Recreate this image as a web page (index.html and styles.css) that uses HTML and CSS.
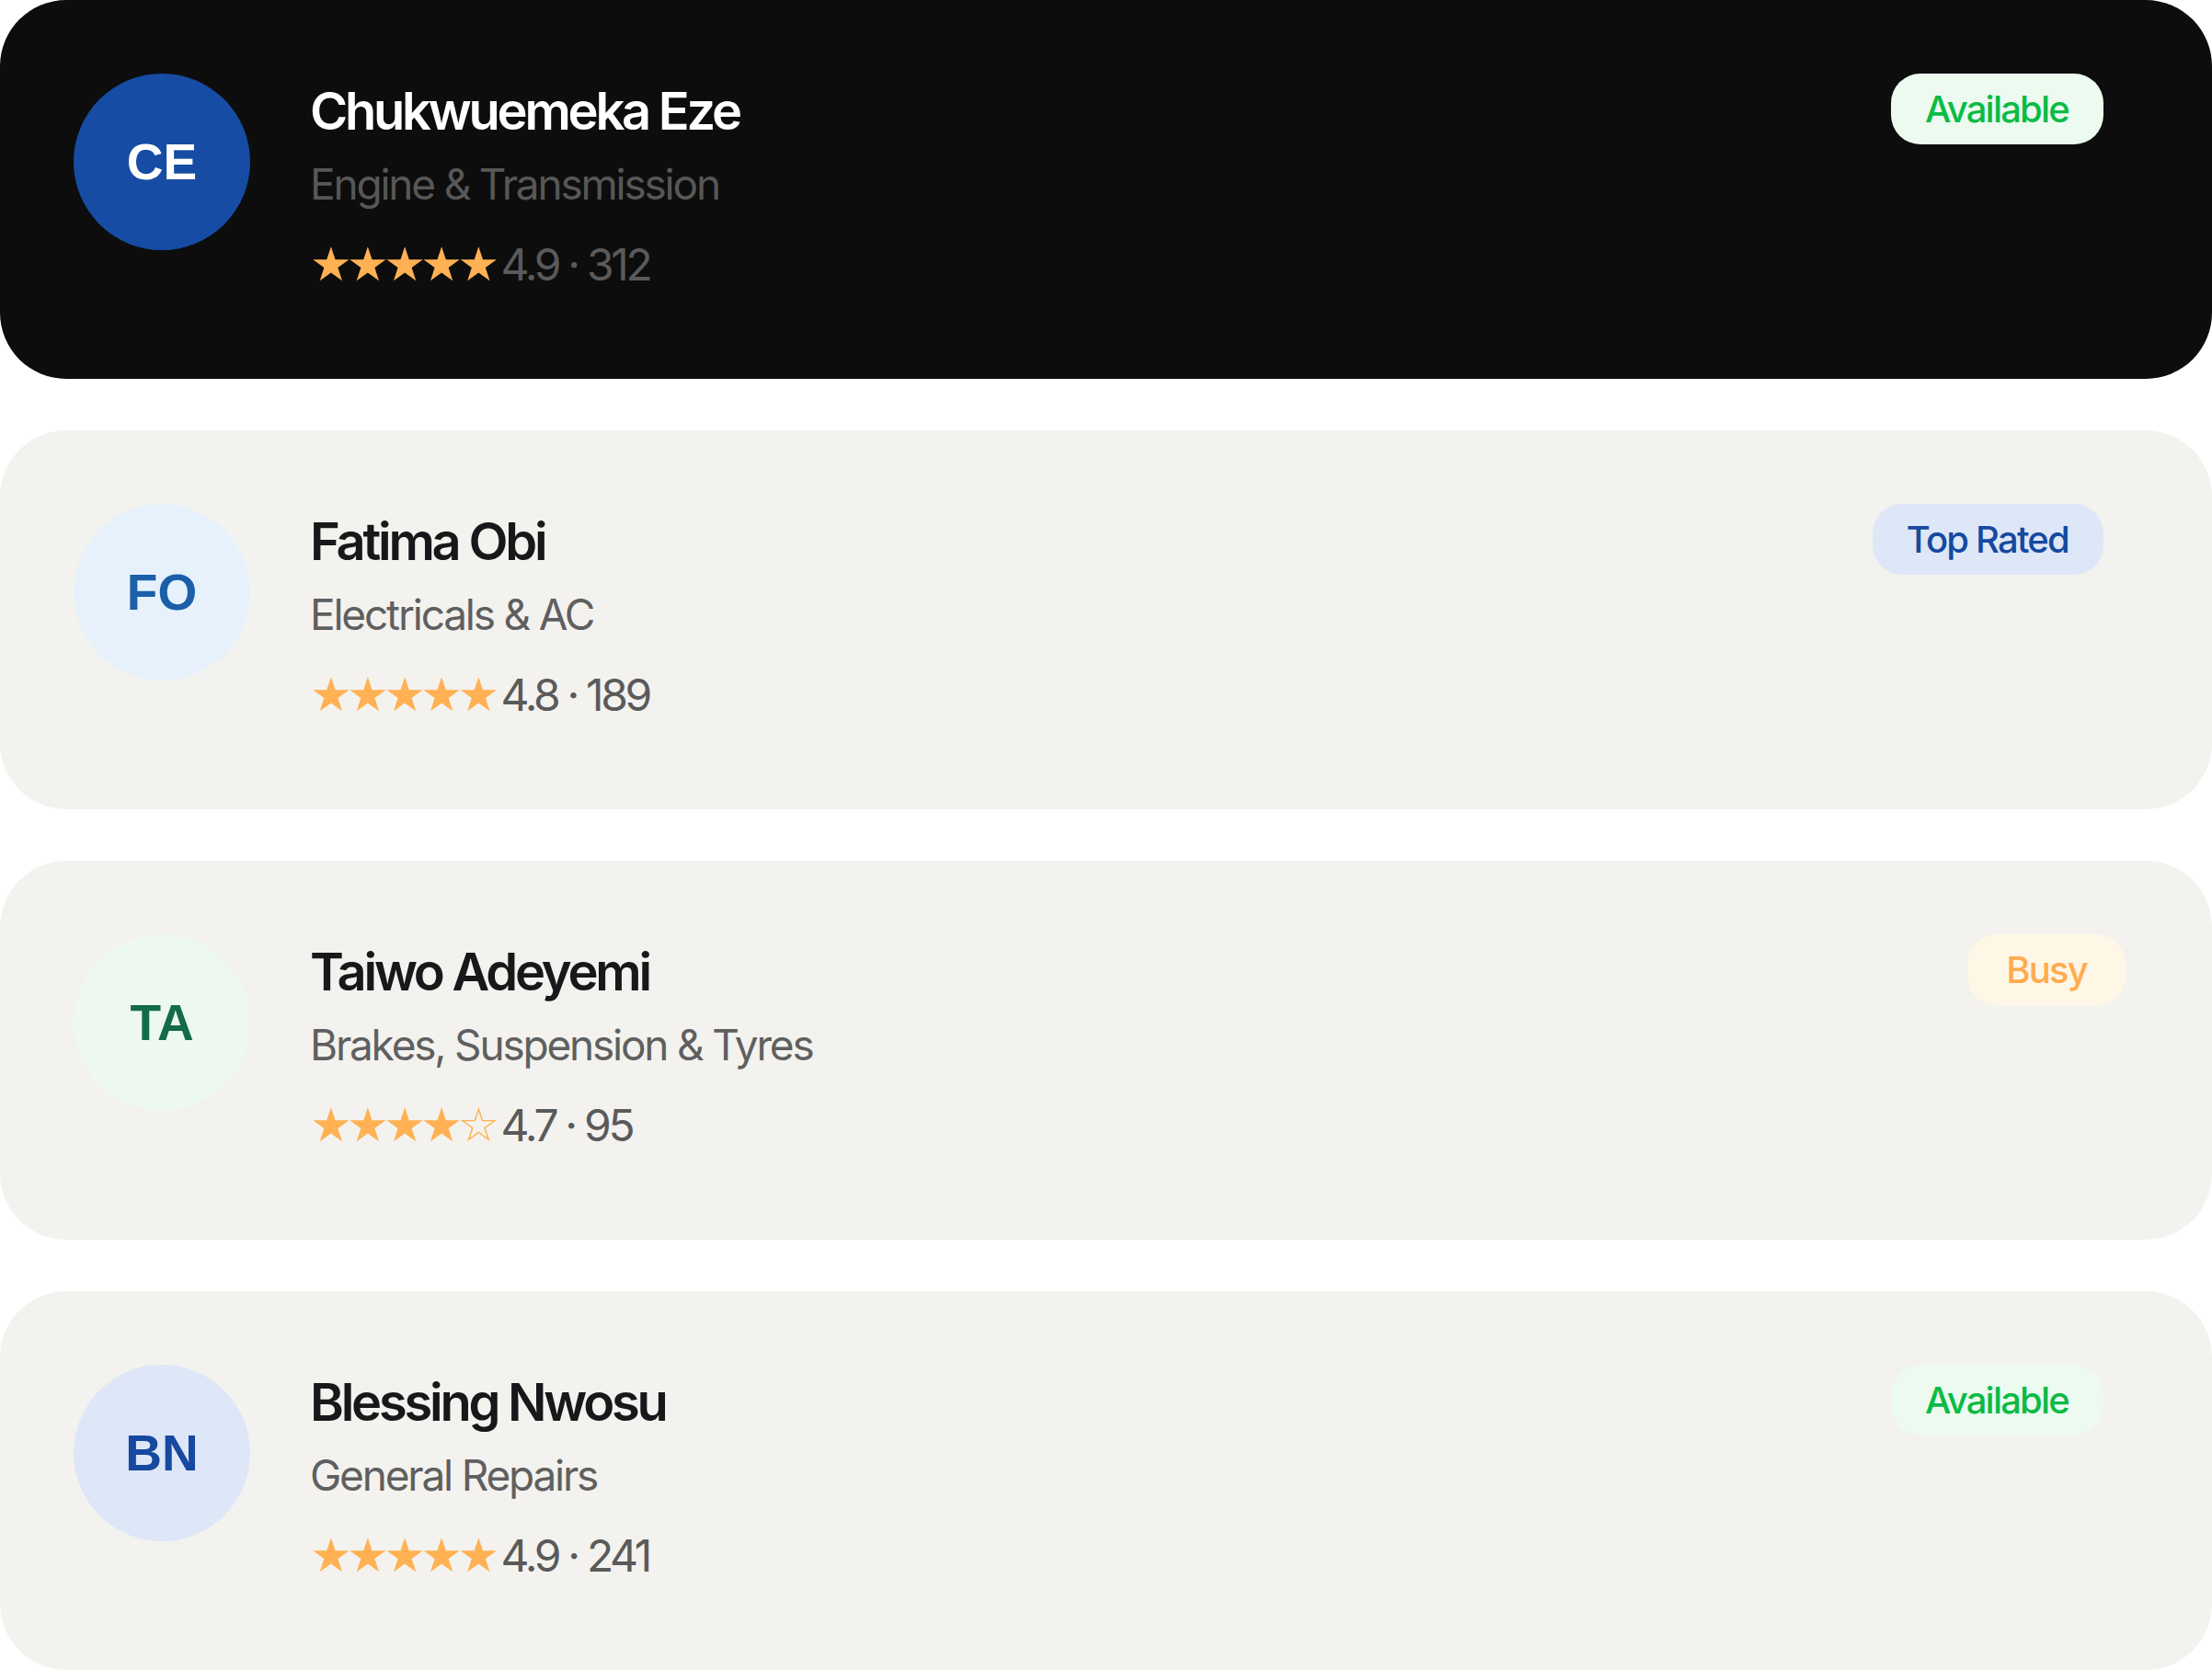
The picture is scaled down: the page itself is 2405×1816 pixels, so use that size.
FILE: index.html
```html
<!DOCTYPE html>
<html lang="en">
<head>
    <meta charset="UTF-8">
    <meta name="viewport" content="width=device-width, initial-scale=1.0">
    <title>Mechanics</title>
    <link rel="stylesheet" href="styles.css">
</head>
<body>
    <main class="mechanic-list">
        <article class="card card-dark">
            <div class="avatar avatar-blue">CE</div>
            <div class="info">
                <h2 class="name">Chukwuemeka Eze</h2>
                <p class="trade">Engine &amp; Transmission</p>
                <p class="rating"><span class="stars">★★★★★</span><span class="score">4.9 · 312</span></p>
            </div>
            <span class="badge badge-available">Available</span>
        </article>

        <article class="card">
            <div class="avatar avatar-sky">FO</div>
            <div class="info">
                <h2 class="name">Fatima Obi</h2>
                <p class="trade">Electricals &amp; AC</p>
                <p class="rating"><span class="stars">★★★★★</span><span class="score">4.8 · 189</span></p>
            </div>
            <span class="badge badge-top">Top Rated</span>
        </article>

        <article class="card">
            <div class="avatar avatar-mint">TA</div>
            <div class="info">
                <h2 class="name">Taiwo Adeyemi</h2>
                <p class="trade">Brakes, Suspension &amp; Tyres</p>
                <p class="rating"><span class="stars">★★★★☆</span><span class="score">4.7 · 95</span></p>
            </div>
            <span class="badge badge-busy">Busy</span>
        </article>

        <article class="card">
            <div class="avatar avatar-pale">BN</div>
            <div class="info">
                <h2 class="name">Blessing Nwosu</h2>
                <p class="trade">General Repairs</p>
                <p class="rating"><span class="stars">★★★★★</span><span class="score">4.9 · 241</span></p>
            </div>
            <span class="badge badge-available">Available</span>
        </article>
    </main>
</body>
</html>
```

FILE: styles.css
```css
:root {
    --card: #f3f2ee;
    --ink: #18181b;
    --muted: #5f5f5f;
    --star: #ffb153;
}

* {
    box-sizing: border-box;
    margin: 0;
    padding: 0;
}

body {
    background: #fff;
    font-family: 'Inter', 'Noto Sans', sans-serif;
}

.mechanic-list {
    display: grid;
    gap: 56px;
}

.card {
    display: flex;
    align-items: flex-start;
    gap: 65px;
    height: 412px;
    padding: 80px 118px 0 80px;
    background: var(--card);
    border-radius: 72px;
}

.card-dark {
    background: #0d0d0d;
}

.avatar {
    flex: none;
    width: 192px;
    height: 192px;
    border-radius: 50%;
    display: flex;
    align-items: center;
    justify-content: center;
    font-family: 'Liberation Sans', Arial, sans-serif;
    font-weight: 700;
    font-size: 55px;
}

.avatar-blue { background: #164ca3; color: #fff; }
.avatar-sky { background: #e6f1fb; color: #1b5fa9; }
.avatar-mint { background: #edf8f0; color: #146b4c; }
.avatar-pale { background: #dde7f7; color: #1649a0; }

.info {
    flex: 1;
}

.name {
    margin-top: 9px;
    font-size: 56px;
    line-height: 64px;
    font-weight: 600;
    letter-spacing: -0.058em;
    color: var(--ink);
}

.card-dark .name {
    color: #fff;
}

.trade {
    margin-top: 19px;
    font-size: 46px;
    line-height: 56px;
    letter-spacing: -0.048em;
    color: var(--muted);
}

.card-dark .trade {
    color: #575757;
}

.rating {
    margin-top: 32px;
    font-size: 48px;
    line-height: 56px;
    color: #5a5a5a;
    white-space: nowrap;
}

.stars {
    font-family: 'DejaVu Sans', sans-serif;
    font-size: 51px;
    letter-spacing: -5.6px;
    color: var(--star);
    margin-right: 7px;
}

.score {
    letter-spacing: -0.07em;
}

.badge {
    flex: none;
    height: 77px;
    padding: 0 38px 0 37px;
    display: flex;
    align-items: center;
    border-radius: 32px;
    font-size: 40px;
    font-weight: 500;
    letter-spacing: -0.045em;
}

.badge-available { background: #ecfaf0; color: #0abb45; }
.badge-top { background: #dde7f7; color: #1649a0; }
.badge-busy { background: #fff7e6; color: #ffab4f; margin-right: -24px; padding: 0 42px; }
```
